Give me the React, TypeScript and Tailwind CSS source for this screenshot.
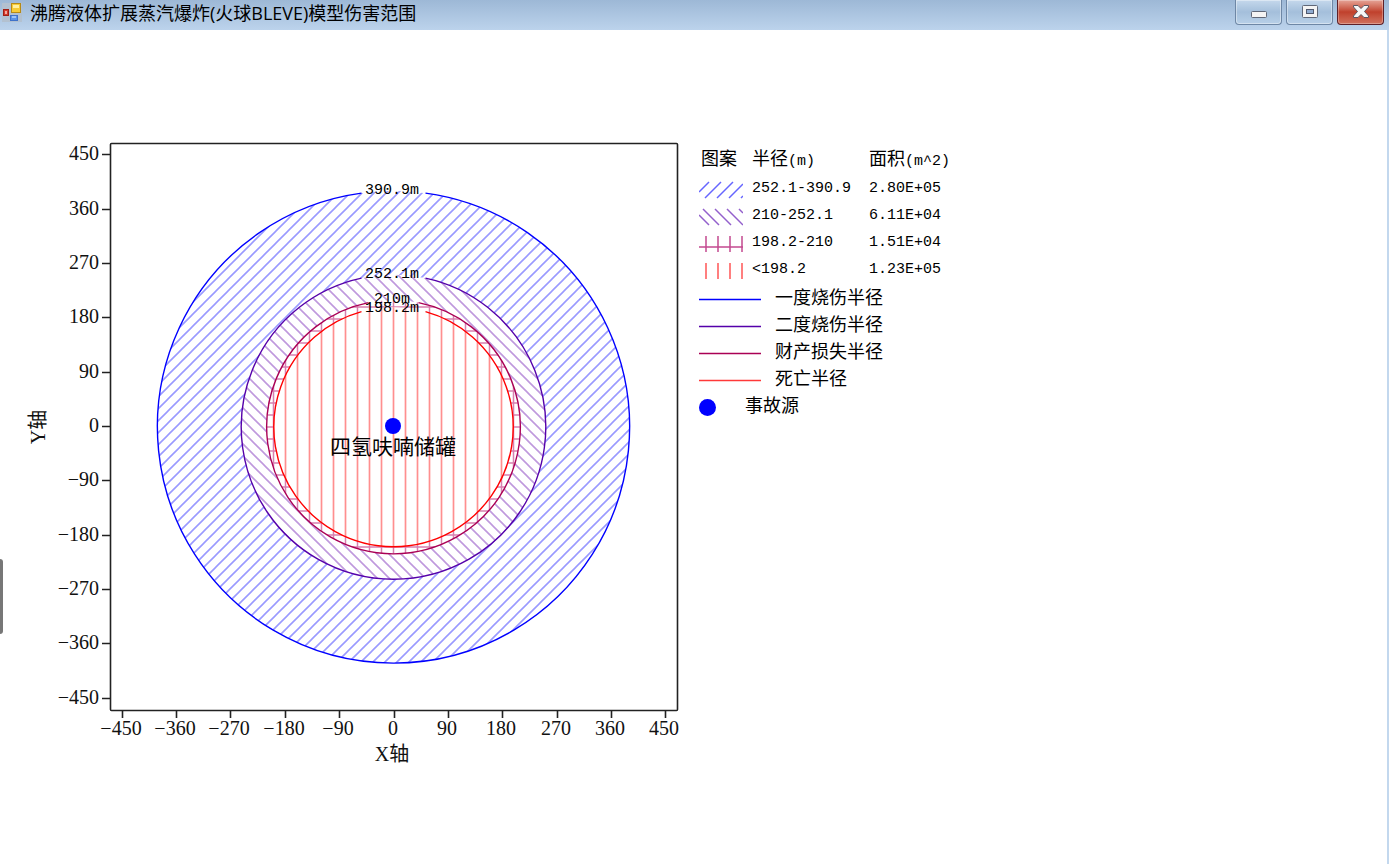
import React from "react";

const CX = 393.5;
const CY = 287;
const SCALE = 0.604;
const TICKS = [-450, -360, -270, -180, -90, 0, 90, 180, 270, 360, 450];

const RINGS = [
  { radius: 390.9, label: "390.9m", stroke: "#0000ff", fill: "url(#hatch-blue)", gap: 32, labelY: 54 },
  { radius: 252.1, label: "252.1m", stroke: "#5500aa", fill: "url(#hatch-purple)", gap: 32, labelY: 138 },
  { radius: 210, label: "210m", stroke: "#aa0055", fill: "url(#hatch-cross)", gap: 25, labelY: 163 },
  { radius: 198.2, label: "198.2m", stroke: "#ff0000", fill: "url(#hatch-red)", gap: 32, labelY: 172 }
];

const ZONES = [
  { pattern: "blue", range: "252.1-390.9", area: "2.80E+05" },
  { pattern: "purple", range: "210-252.1", area: "6.11E+04" },
  { pattern: "cross", range: "198.2-210", area: "1.51E+04" },
  { pattern: "red", range: "<198.2", area: "1.23E+05" }
];

const LINES = [
  { name: "一度烧伤半径", stroke: "#0000ff" },
  { name: "二度烧伤半径", stroke: "#5500aa" },
  { name: "财产损失半径", stroke: "#aa0055" },
  { name: "死亡半径", stroke: "#ff3838" }
];

const SWATCHES: Record<string, { d: string; stroke: string }> = {
  blue: { d: "M0 12L10 2M6 18L22 2M18 18L34 2M30 18L44 4M42 18L44 16", stroke: "#6666ff" },
  purple: { d: "M0 8L10 18M4 2L20 18M16 2L32 18M28 2L44 18M40 2L44 6", stroke: "#9360cc" },
  cross: { d: "M0 13H44M7 2V18M19 2V18M31 2V18M43 2V18", stroke: "#c44a90" },
  red: { d: "M7 2V18M19 2V18M31 2V18M43 2V18", stroke: "#ff5555" }
};

const formatTick = (value: number) => (value < 0 ? `−${-value}` : `${value}`);

const arcPath = (r: number, gap: number) => {
  const dy = Math.sqrt(r * r - gap * gap);
  return `M${CX + gap} ${CY - dy}A${r} ${r} 0 1 1 ${CX - gap} ${CY - dy}`;
};

const TitleBar: React.FC = () => (
  <header className="flex h-[30px] items-start justify-between bg-linear-to-b from-[#9db8d6] to-[#bcd3ec] pr-[5px]">
    <div className="flex h-[26px] items-center gap-2 pl-0.5">
      <svg width="20" height="20" viewBox="0 0 20 20" aria-hidden="true">
        <rect width="20" height="19" fill="#b3c1d0" />
        <rect x="9.5" y="0.5" width="9" height="9" fill="#f7cb35" stroke="#b58a17" />
        <rect x="11" y="2" width="6" height="3" fill="#fff0a0" />
        <rect x="1.5" y="6.5" width="5" height="6" fill="#d33a2c" stroke="#a01f16" />
        <rect x="3" y="8" width="2" height="3" fill="#f5a79c" />
        <rect x="8.5" y="12.5" width="7" height="5" fill="#5b93e6" stroke="#3f72c9" />
        <rect x="10" y="13" width="4" height="2" fill="#9cc3f7" />
      </svg>
      <h1 className="font-['Open_Sans','Noto_Sans_CJK_SC',sans-serif] text-[18px] leading-[26px] whitespace-nowrap text-black">
        沸腾液体扩展蒸汽爆炸(火球BLEVE)模型伤害范围
      </h1>
    </div>
    <div className="flex gap-1">
      <button
        type="button"
        aria-label="最小化"
        className="flex h-[25px] w-[47px] items-center justify-center rounded-b-sm border border-t-0 border-[#6e87a5] bg-linear-to-b from-[#c5d8ec] via-[#a4bfdb] to-[#b8d0e8] pb-0.5 ring-1 ring-white/40 ring-inset"
      >
        <svg width="18" height="16" viewBox="0 0 18 16">
          <rect x="1.5" y="8.5" width="15" height="6" rx="1" fill="#f4f4f4" stroke="#606878" />
        </svg>
      </button>
      <button
        type="button"
        aria-label="最大化"
        className="flex h-[25px] w-[47px] items-center justify-center rounded-b-sm border border-t-0 border-[#6e87a5] bg-linear-to-b from-[#c5d8ec] via-[#a4bfdb] to-[#b8d0e8] pb-0.5 ring-1 ring-white/40 ring-inset"
      >
        <svg width="18" height="16" viewBox="0 0 18 16">
          <rect x="1.5" y="2.5" width="15" height="12" rx="1" fill="#f4f4f4" stroke="#606878" />
          <rect x="5.5" y="6.5" width="7" height="4" fill="#8fabd0" stroke="#50586c" />
        </svg>
      </button>
      <button
        type="button"
        aria-label="关闭"
        className="flex h-[25px] w-[47px] items-center justify-center rounded-b-sm border border-t-0 border-[#5e2028] bg-linear-to-b from-[#e5a497] via-[#c0402c] to-[#d0705c] pb-0.5 ring-1 ring-white/30 ring-inset"
      >
        <svg width="18" height="16" viewBox="0 0 18 16">
          <path
            d="M1.5 2.5H6L9 5.5L12 2.5H16.5V4L12.5 8.5L16.5 13V14.5H12L9 11.5L6 14.5H1.5V13L5.5 8.5L1.5 4Z"
            fill="#f6f6f6"
            stroke="#5c5560"
          />
        </svg>
      </button>
    </div>
  </header>
);

const HatchPatterns: React.FC = () => (
  <defs>
    <pattern id="hatch-blue" y="7" width="12" height="12" patternUnits="userSpaceOnUse">
      <path d="M-4 16L16 -4M-4 4L4 -4M8 16L16 8" stroke="#9a9aff" strokeWidth="1.6" />
    </pattern>
    <pattern id="hatch-purple" y="1" width="12" height="12" patternUnits="userSpaceOnUse">
      <path d="M-4 -4L16 16M-4 8L4 16M8 -4L16 4" stroke="#bf99dd" strokeWidth="1.6" />
    </pattern>
    <pattern id="hatch-cross" x="387" y="281" width="12" height="12" patternUnits="userSpaceOnUse">
      <path d="M6.5 0V12M0 6H12" stroke="#d880b0" strokeWidth="1.5" />
    </pattern>
    <pattern id="hatch-red" x="387" y="281" width="12" height="12" patternUnits="userSpaceOnUse">
      <path d="M6.5 0V12" stroke="#ff8f8f" strokeWidth="1.7" />
    </pattern>
  </defs>
);

const DamageChart: React.FC = () => (
  <svg
    width="690"
    height="640"
    viewBox="0 0 690 640"
    fill="none"
    role="img"
    aria-label="伤害范围"
    className="shrink-0 font-['Liberation_Serif','Noto_Sans_CJK_SC',serif] text-[20px]"
  >
    <HatchPatterns />
    <rect x="110.5" y="3.5" width="567" height="567" rx="1" stroke="#222" strokeWidth="1.6" />

    {TICKS.map((value) => {
      const x = Math.round(CX + value * SCALE);
      const y = Math.round(CY - value * SCALE);
      return (
        <g key={value} fill="#111">
          <path d={`M${x + 0.5} 571V578M102 ${y - 0.5}H110`} stroke="#222" strokeWidth="1.6" />
          <text x={x - 1} y="595" textAnchor="middle">{formatTick(value)}</text>
          <text x="99" y={y + 5} textAnchor="end">{formatTick(value)}</text>
        </g>
      );
    })}

    {RINGS.map((ring) => {
      const r = ring.radius * SCALE;
      return (
        <g key={ring.label}>
          <circle cx={CX} cy={CY} r={r} fill="#fff" />
          <circle cx={CX} cy={CY} r={r} fill={ring.fill} />
          <path d={arcPath(r, ring.gap)} stroke={ring.stroke} strokeWidth="1.4" />
        </g>
      );
    })}

    <g fill="#000" textAnchor="middle" className="font-['Liberation_Mono',monospace] text-[15px]">
      {RINGS.map((ring) => (
        <text key={ring.label} x="392" y={ring.labelY}>{ring.label}</text>
      ))}
    </g>

    <circle cx="393" cy="286" r="8" fill="#00f" />
    <text x="393" y="314" textAnchor="middle" fill="#000" className="text-[21px]">四氢呋喃储罐</text>
    <text x="392" y="621" textAnchor="middle" fill="#111">X轴</text>
    <text x="45" y="287" textAnchor="middle" fill="#111" transform="rotate(-90 45 287)">Y轴</text>
  </svg>
);

const Legend: React.FC = () => (
  <section className="ml-[9px] pt-[5px] font-['Liberation_Mono','Noto_Sans_CJK_SC',monospace] text-[15px] text-black">
    <table className="border-collapse text-left">
      <thead>
        <tr className="h-[31px]">
          <th className="w-[53px] p-0 pl-0.5 text-[18px] leading-[27px] font-normal">图案</th>
          <th className="w-[117px] p-0 font-normal"><span className="text-[18px] leading-[27px]">半径</span>(m)</th>
          <th className="p-0 font-normal"><span className="text-[18px] leading-[27px]">面积</span>(m^2)</th>
        </tr>
      </thead>
      <tbody>
        {ZONES.map((zone) => (
          <tr key={zone.pattern} className="h-[27px]">
            <td className="p-0">
              <svg width="44" height="20" viewBox="0 0 44 20" fill="none">
                <path d={SWATCHES[zone.pattern].d} stroke={SWATCHES[zone.pattern].stroke} strokeWidth="1.5" />
              </svg>
            </td>
            <td className="p-0">{zone.range}</td>
            <td className="p-0">{zone.area}</td>
          </tr>
        ))}
      </tbody>
    </table>
    <ul className="pt-0.5 text-[18px]">
      {LINES.map((line) => (
        <li key={line.name} className="flex h-[27px] items-center gap-[14px]">
          <svg width="62" height="3" viewBox="0 0 62 3" aria-hidden="true">
            <path d="M0 1.5H62" stroke={line.stroke} strokeWidth="1.6" />
          </svg>
          {line.name}
        </li>
      ))}
      <li className="flex h-[27px] items-center gap-[29px]">
        <span className="size-[17px] rounded-full bg-[#0000ff]" />
        事故源
      </li>
    </ul>
  </section>
);

export default function App() {
  return (
    <div className="flex min-h-screen flex-col bg-white">
      <TitleBar />
      <main className="relative flex flex-1 items-start border-r-2 border-[#c3d8ee] pt-[110px]">
        <div className="absolute top-[529px] left-0 h-[75px] w-[3px] rounded-r bg-[#777]" />
        <DamageChart />
        <Legend />
      </main>
    </div>
  );
}
